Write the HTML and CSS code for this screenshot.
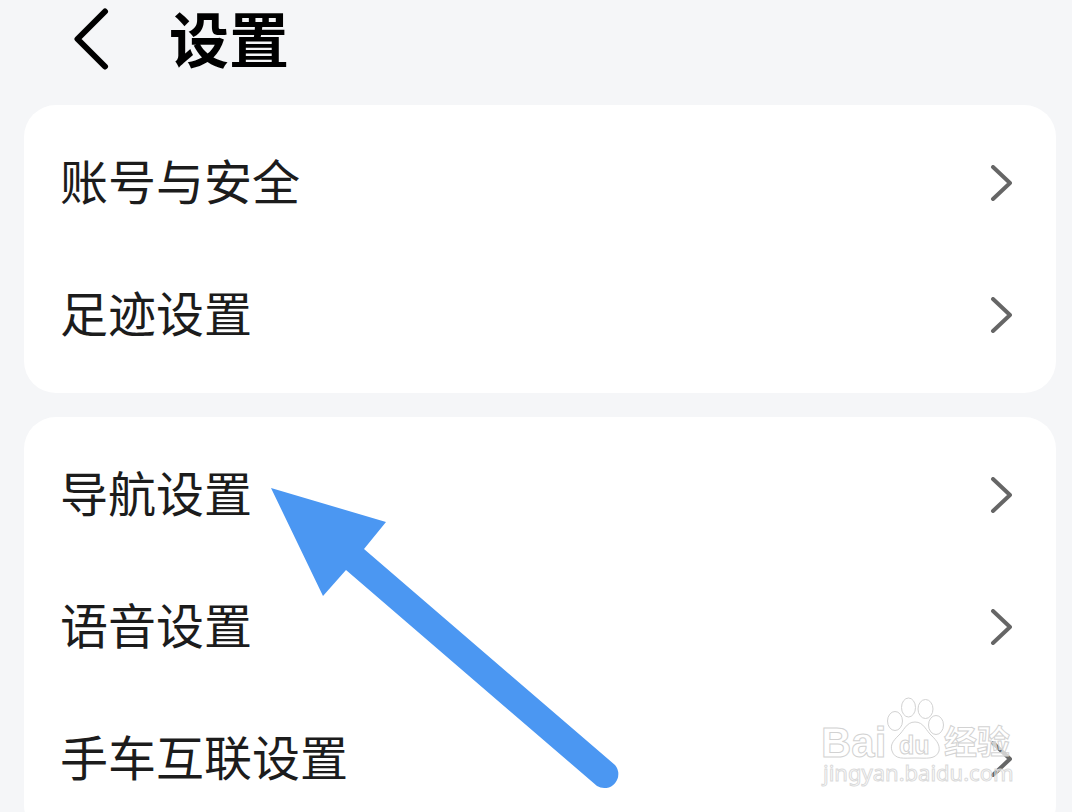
FILE: index.html
```
<!DOCTYPE html>
<html lang="zh-CN">
<head>
<meta charset="utf-8">
<meta name="viewport" content="width=device-width, initial-scale=1">
<title>设置</title>
<link rel="stylesheet" href="styles.css">
</head>
<body>
<div class="screen">
  <header class="header">
    <button class="back" type="button" aria-label="返回">
      <svg width="36" height="62" viewBox="0 0 36 62"><path d="M32 3.500 4.500 31 32 58.500"/></svg>
    </button>
    <h1 class="title">设置</h1>
  </header>
  <main class="groups">
    <nav class="card">
      <a class="row" href="#account"><span class="label">账号与安全</span><svg class="chevron" width="22" height="36" viewBox="0 0 22 36"><path d="M3 2 20 18 3 34"/></svg></a>
      <a class="row" href="#footprint"><span class="label">足迹设置</span><svg class="chevron" width="22" height="36" viewBox="0 0 22 36"><path d="M3 2 20 18 3 34"/></svg></a>
    </nav>
    <nav class="card">
      <a class="row" href="#navigation"><span class="label">导航设置</span><svg class="chevron" width="22" height="36" viewBox="0 0 22 36"><path d="M3 2 20 18 3 34"/></svg></a>
      <a class="row" href="#voice"><span class="label">语音设置</span><svg class="chevron" width="22" height="36" viewBox="0 0 22 36"><path d="M3 2 20 18 3 34"/></svg></a>
      <a class="row" href="#car"><span class="label">手车互联设置</span><svg class="chevron" width="22" height="36" viewBox="0 0 22 36"><path d="M3 2 20 18 3 34"/></svg></a>
    </nav>
  </main>
  <svg class="pointer" width="350" height="302" viewBox="0 0 350 302" aria-hidden="true">
    <path d="M0 0 115 34 93 61 344 277A14 14 0 0 1 326 298L75 82 52 108Z"/>
  </svg>
  <svg class="watermark" width="200" height="100" viewBox="0 0 200 100" role="img" aria-label="Baidu 经验">
    <text class="mark-latin" x="1" y="61">Bai</text>
    <g class="paw">
      <ellipse cx="75" cy="25" rx="7.500" ry="9.500"/>
      <ellipse cx="88.500" cy="11.500" rx="7" ry="9.500"/>
      <ellipse cx="105.500" cy="13" rx="7.500" ry="9.500"/>
      <ellipse cx="116" cy="29" rx="7.500" ry="9.500"/>
      <path d="M95 26C86 26 84 35 78 40C73 45 70 49 72 55C75 64 84 62 95 62S116 64 119 55C120 49 117 45 112 40C106 35 104 26 95 26Z"/>
    </g>
    <text class="mark-du" x="79" y="58">du</text>
    <text class="mark-cjk" x="124" y="58">经验</text>
    <text class="mark-url" x="3" y="85">jingyan.baidu.com</text>
  </svg>
</div>
</body>
</html>
```
FILE: styles.css
```
body {
  margin: 0;
  background: #f5f6f8;
  color: #1c1c1c;
  font-family: "Noto Sans CJK SC", sans-serif;
}

.screen {
  position: relative;
  height: 100vh;
  overflow: hidden;
}

.header {
  display: flex;
  align-items: center;
  gap: 60px;
  height: 78px;
  padding: 0 73px;
}

.back {
  display: flex;
  padding: 0;
  border: 0;
  background: none;
}

.back path {
  fill: none;
  stroke: #000;
  stroke-width: 6;
  stroke-linecap: round;
  stroke-linejoin: round;
}

.title {
  margin: 0;
  padding-bottom: 4px;
  color: #000;
  font-size: 60px;
  font-weight: 700;
  line-height: 72px;
}

.groups {
  display: flex;
  flex-direction: column;
  gap: 24px;
  padding: 27px 16px 24px 24px;
}

.card {
  padding: 12px 0;
  border-radius: 32px;
  background: #fff;
}

.row {
  display: flex;
  align-items: center;
  justify-content: space-between;
  height: 132px;
  padding: 0 44px 0 36px;
  color: inherit;
  font-size: 48px;
  line-height: 72px;
  text-decoration: none;
}

.label {
  padding-bottom: 8px;
}

.chevron {
  fill: none;
  stroke: #666;
  stroke-width: 4;
  stroke-linecap: round;
  stroke-linejoin: round;
}

.pointer {
  position: absolute;
  top: 488px;
  left: 271px;
  fill: #4b97f2;
}

.watermark {
  position: absolute;
  top: 696px;
  left: 820px;
  fill: #fff;
  fill-opacity: 0.7;
  stroke: #d2d2d2;
  stroke-width: 1;
  overflow: visible;
}

.mark-latin {
  font: 700 42px "Liberation Sans", sans-serif;
}

.mark-du {
  font: 700 25px "Liberation Sans", sans-serif;
}

.mark-cjk {
  font: 700 33px "Noto Sans CJK SC", sans-serif;
}

.mark-url {
  font: 400 22px "Noto Sans", sans-serif;
  fill-opacity: 0.3;
  stroke: #dadada;
}
```
